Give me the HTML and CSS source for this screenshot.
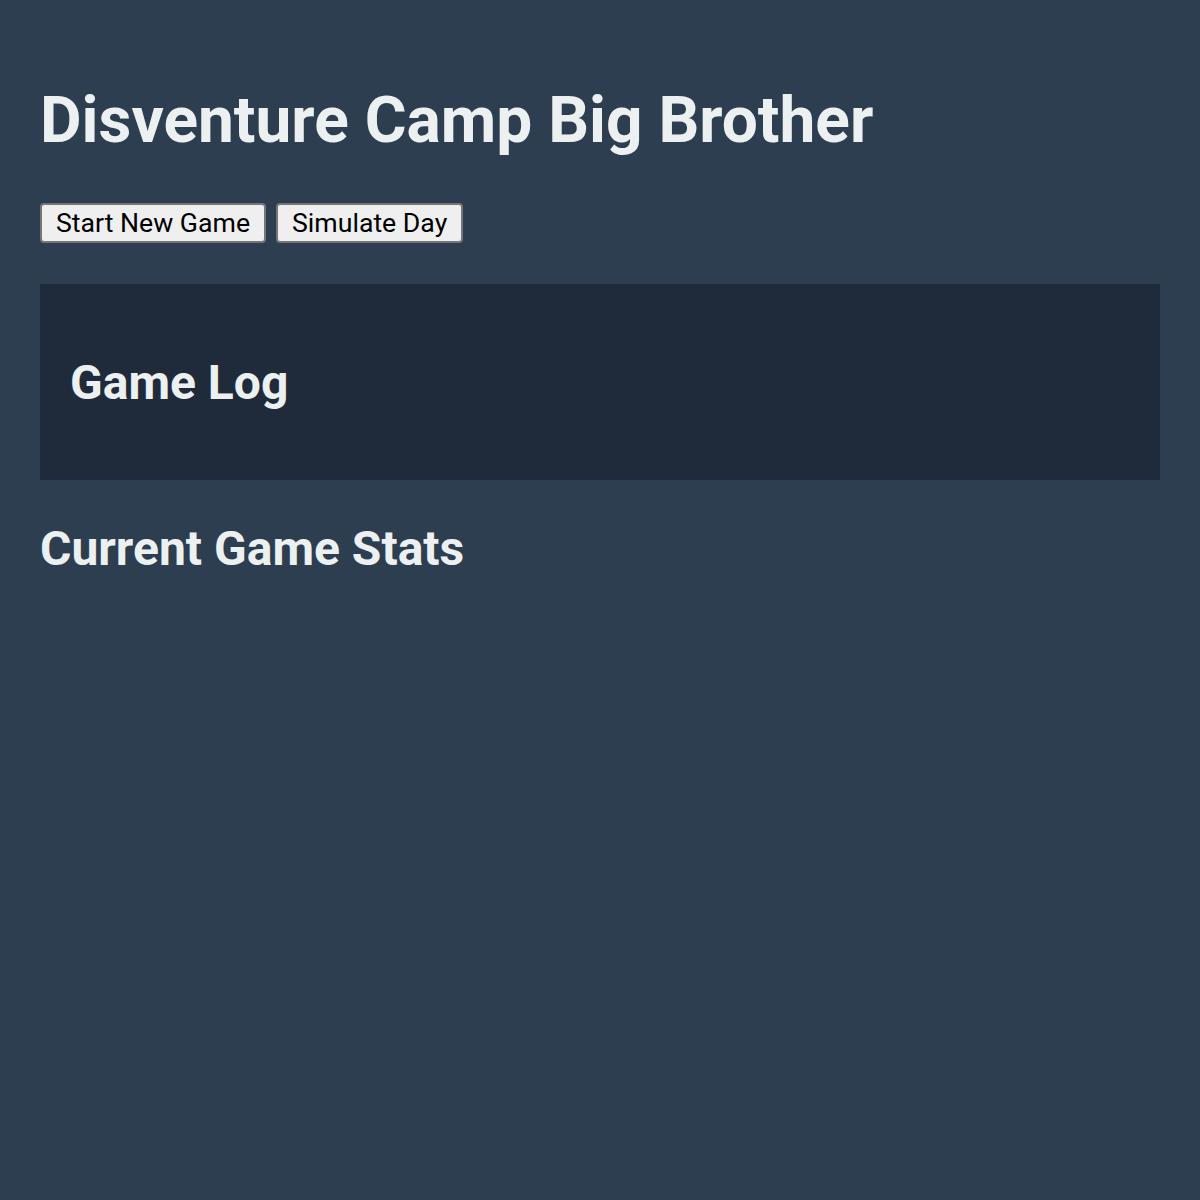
FILE: index.html
```html
<!DOCTYPE html>
<html lang="en">
<head>
<meta charset="utf-8">
<title>Disventure Camp Big Brother</title>
<link rel="stylesheet" href="styles.css">
</head>
<body>
  <main class="app">
    <h1 class="app-title">Disventure Camp Big Brother</h1>
    <div class="controls">
      <button class="btn" type="button">Start New Game</button>
      <button class="btn" type="button">Simulate Day</button>
    </div>
    <section class="log-panel">
      <h2 class="section-title">Game Log</h2>
    </section>
    <section class="stats">
      <h2 class="section-title">Current Game Stats</h2>
    </section>
  </main>
</body>
</html>
```

FILE: styles.css
```css
html, body {
  margin: 0;
  padding: 0;
}

body {
  background: #2c3e50;
  color: #ecf0f1;
  font-family: Roboto, "Liberation Sans", Arial, sans-serif;
}

.app {
  padding: 40px;
}

.app-title {
  font-size: 64px;
  font-weight: 700;
  margin: 43px 0 45px;
}

.controls {
  display: flex;
  gap: 10px;
}

.btn {
  font-family: Roboto, "Liberation Sans", Arial, sans-serif;
  font-size: 26.67px;
  color: #000;
  background: #efefef;
  border: 2px solid #767676;
  border-radius: 4px;
  padding: 2px 14px;
  line-height: 32px;
}

.log-panel {
  margin-top: 41px;
  background: #1f2b3a;
  padding: 30px 30px 29px;
}

.section-title {
  font-size: 48px;
  font-weight: 700;
  margin: 40px 0;
}
```
